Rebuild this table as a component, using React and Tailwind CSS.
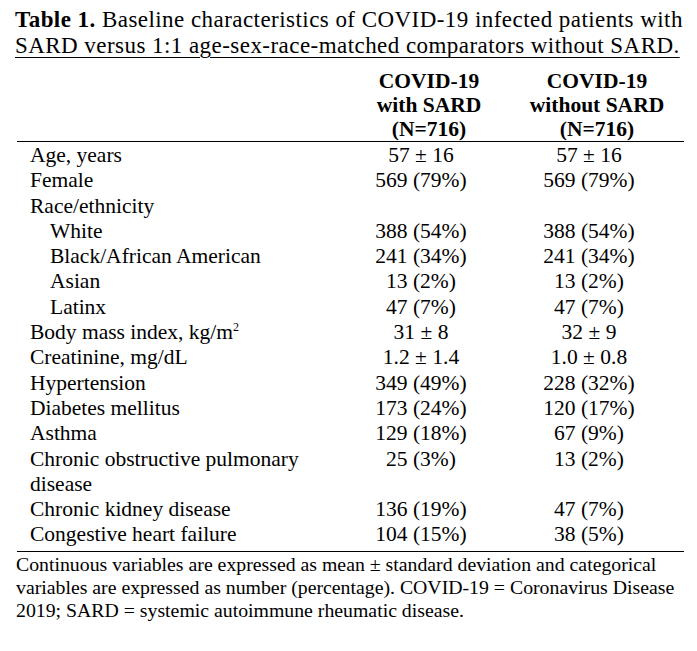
const rows = [
  { label: "Age, years", a: "57 ± 16", b: "57 ± 16" },
  { label: "Female", a: "569 (79%)", b: "569 (79%)" },
  { label: "Race/ethnicity", a: "", b: "" },
  { label: "White", a: "388 (54%)", b: "388 (54%)", indent: true },
  { label: "Black/African American", a: "241 (34%)", b: "241 (34%)", indent: true },
  { label: "Asian", a: "13 (2%)", b: "13 (2%)", indent: true },
  { label: "Latinx", a: "47 (7%)", b: "47 (7%)", indent: true },
  { label: "Body mass index, kg/m", sup: "2", a: "31 ± 8", b: "32 ± 9" },
  { label: "Creatinine, mg/dL", a: "1.2 ± 1.4", b: "1.0 ± 0.8" },
  { label: "Hypertension", a: "349 (49%)", b: "228 (32%)" },
  { label: "Diabetes mellitus", a: "173 (24%)", b: "120 (17%)" },
  { label: "Asthma", a: "129 (18%)", b: "67 (9%)" },
  { label: "Chronic obstructive pulmonary", extra: "disease", a: "25 (3%)", b: "13 (2%)" },
  { label: "Chronic kidney disease", a: "136 (19%)", b: "47 (7%)" },
  { label: "Congestive heart failure", a: "104 (15%)", b: "38 (5%)" },
];

export default function App() {
  return (
    <div
      className="w-[697px] h-[651px] bg-white text-black pt-[7px]"
      style={{ fontFamily: '"Liberation Serif", "Times New Roman", serif' }}
    >
      <div className="pl-[15px] text-[23px] leading-[25.5px] tracking-[0.45px] whitespace-nowrap">
        <p>
          <span className="font-bold">Table 1.</span> Baseline characteristics of COVID-19 infected patients with
        </p>
        <p className="underline underline-offset-[4px] decoration-1">
          SARD versus 1:1 age-sex-race-matched comparators without SARD.
        </p>
      </div>

      <div className="ml-[17px] w-[667px] mt-[11px] text-[21.5px]">
        <div className="grid grid-cols-[324px_160px_176px] font-bold leading-[24px] border-b border-black">
          <div />
          <div className="text-center pl-[16px]">
            COVID-19
            <br />
            with SARD
            <br />
            (N=716)
          </div>
          <div className="text-center pl-[16px]">
            COVID-19
            <br />
            without SARD
            <br />
            (N=716)
          </div>
        </div>

        <div className="pt-[1px] pb-[3px] border-b border-black leading-[25.3px]">
          {rows.map((r) => (
            <div key={r.label} className="grid grid-cols-[324px_160px_176px]">
              <div className={r.indent ? "pl-[33px]" : "pl-[13px]"}>
                {r.label}
                {r.sup && <sup className="text-[12px] -top-[0.7em]">{r.sup}</sup>}
                {r.extra && (
                  <>
                    <br />
                    {r.extra}
                  </>
                )}
              </div>
              <div className="text-center">{r.a}</div>
              <div className="text-center">{r.b}</div>
            </div>
          ))}
        </div>

        <p className="text-[19.8px] leading-[23px] pt-[1px] -ml-[1px] whitespace-nowrap">
          Continuous variables are expressed as mean ± standard deviation and categorical
          <br />
          variables are expressed as number (percentage). COVID-19 = Coronavirus Disease
          <br />
          2019; SARD = systemic autoimmune rheumatic disease.
        </p>
      </div>
    </div>
  );
}
